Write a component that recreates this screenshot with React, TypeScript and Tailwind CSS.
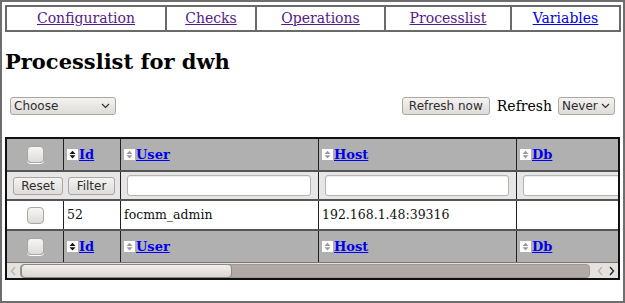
import React from "react";

const serif = { fontFamily: '"DejaVu Serif", serif' };
const sans = { fontFamily: '"DejaVu Sans", sans-serif' };

function SortIcon({ dark }: { dark?: boolean }) {
  const c = dark ? "#111" : "#9a9a9a";
  return (
    <span className="inline-block w-[11px] h-[11px] bg-white mr-[1px] align-[-1px]">
      <svg width="11" height="11" viewBox="0 0 11 11">
        <path d="M2.5 5 L5.5 1.8 L8.5 5 Z" fill={c} />
        <path d="M2.5 6.2 L5.5 9.4 L8.5 6.2 Z" fill={c} />
      </svg>
    </span>
  );
}

function Checkbox() {
  return (
    <span className="inline-block w-[17px] h-[17px] rounded-[4px] border border-[#aaa7a3] bg-gradient-to-b from-[#f7f6f5] to-[#dedbd8] shadow-[0_1px_0_#fff]" />
  );
}

function GtkButton({ children, className = "" }: { children: React.ReactNode; className?: string }) {
  return (
    <span
      className={`inline-flex items-center justify-center h-[18px] rounded-[3px] border border-[#aaa6a1] bg-gradient-to-b from-[#f4f3f2] to-[#dedbd8] text-[12px] text-[#2e2e2e] leading-none ${className}`}
      style={sans}
    >
      {children}
    </span>
  );
}

function HeadLink({ children, dark }: { children: React.ReactNode; dark?: boolean }) {
  return (
    <span className="inline-flex items-center">
      <SortIcon dark={dark} />
      <a href="#" className="text-[#0000ee] underline font-bold text-[13px]">
        {children}
      </a>
    </span>
  );
}

function TextInput({ className = "" }: { className?: string }) {
  return (
    <span className={`block h-[21px] rounded-[3px] border border-[#b6b2ae] bg-white shadow-[inset_0_1px_1px_rgba(0,0,0,0.08)] ${className}`} />
  );
}

export default function App() {
  const nav = [
    { t: "Configuration", w: "w-[160px]", v: true },
    { t: "Checks", w: "w-[90px]", v: true },
    { t: "Operations", w: "w-[129px]", v: true },
    { t: "Processlist", w: "w-[126px]", v: true },
    { t: "Variables", w: "flex-1", v: false },
  ];
  const cellV = "border-r border-[#222]";
  return (
    <div className="w-[625px] h-[303px] border-2 border-[#6e6e6e] bg-white overflow-hidden pt-[3px] pl-[3px] pr-[2px]" style={serif}>
      {/* nav */}
      <div className="flex h-[27px] border-2 border-[#6a6a6a]">
        {nav.map((n, i) => (
          <div
            key={n.t}
            className={`${n.w} shrink-0 flex items-center justify-center ${i < nav.length - 1 ? "border-r-2 border-[#6a6a6a]" : ""}`}
          >
            <a href="#" className={`text-[14px] underline ${n.v ? "text-[#551a8b]" : "text-[#0000ee]"}`}>
              {n.t}
            </a>
          </div>
        ))}
      </div>

      <h1 className="text-[21px] font-bold mt-[17px] ml-0 leading-[26px] text-black">Processlist for dwh</h1>

      {/* controls */}
      <div className="flex items-center mt-[22px] h-[18px]">
        <span
          className="ml-[5px] inline-flex items-center justify-between w-[106px] h-[18px] rounded-[3px] border border-[#aaa6a1] bg-gradient-to-b from-[#f4f3f2] to-[#dedbd8] text-[12px] text-[#2e2e2e] pl-[3px] pr-[5px]"
          style={sans}
        >
          Choose
          <svg width="9" height="6" viewBox="0 0 9 6"><path d="M1 1 L4.5 4.5 L8 1" stroke="#333" strokeWidth="1.2" fill="none" /></svg>
        </span>
        <div className="flex-1" />
        <GtkButton className="w-[88px]">Refresh now</GtkButton>
        <span className="text-[14px] ml-[7px] mr-[6px] text-black">Refresh</span>
        <span
          className="inline-flex items-center justify-between w-[57px] h-[18px] rounded-[3px] border border-[#aaa6a1] bg-gradient-to-b from-[#f4f3f2] to-[#dedbd8] text-[12px] text-[#2e2e2e] pl-[3px] pr-[4px] mr-[6px]"
          style={sans}
        >
          Never
          <svg width="9" height="6" viewBox="0 0 9 6"><path d="M1 1 L4.5 4.5 L8 1" stroke="#333" strokeWidth="1.2" fill="none" /></svg>
        </span>
      </div>

      {/* table */}
      <div className="mt-[22px] w-[615px] border-2 border-[#111] overflow-hidden">
        <div className="overflow-hidden">
          <div className="w-[800px]">
            {/* header */}
            <div className="flex h-[33px] bg-[#b0b0b0] border-b-2 border-[#555]">
              <div className={`w-[57px] flex items-center justify-center ${cellV}`}><Checkbox /></div>
              <div className={`w-[57px] flex items-center pl-[3px] ${cellV}`}><HeadLink dark>Id</HeadLink></div>
              <div className={`w-[198px] flex items-center pl-[3px] ${cellV}`}><HeadLink>User</HeadLink></div>
              <div className={`w-[198px] flex items-center pl-[3px] ${cellV}`}><HeadLink>Host</HeadLink></div>
              <div className="flex-1 flex items-center pl-[3px]"><HeadLink>Db</HeadLink></div>
            </div>
            {/* filter row */}
            <div className="flex h-[29px] bg-[#e6e6e6] border-b-2 border-[#555]">
              <div className="w-[114px] flex items-center pl-[6px] gap-[5px] border-r border-[#222]">
                <GtkButton className="w-[50px]">Reset</GtkButton>
                <GtkButton className="w-[47px]">Filter</GtkButton>
              </div>
              <div className={`w-[198px] flex items-center pl-[6px] pr-[7px] ${cellV}`}><TextInput className="w-full" /></div>
              <div className={`w-[198px] flex items-center pl-[6px] pr-[7px] ${cellV}`}><TextInput className="w-full" /></div>
              <div className="flex-1 flex items-center pl-[6px] pr-[7px]"><TextInput className="w-[184px]" /></div>
            </div>
            {/* data row */}
            <div className="flex h-[30px] bg-white border-b-2 border-[#555] text-[12.5px] text-[#111]">
              <div className={`w-[57px] flex items-center justify-center ${cellV}`}><Checkbox /></div>
              <div className={`w-[57px] flex items-center pl-[3px] ${cellV}`}>52</div>
              <div className={`w-[198px] flex items-center pl-[3px] ${cellV}`}>focmm_admin</div>
              <div className={`w-[198px] flex items-center pl-[3px] ${cellV}`}>192.168.1.48:39316</div>
              <div className="flex-1" />
            </div>
            {/* footer header */}
            <div className="flex h-[31px] bg-[#b0b0b0]">
              <div className={`w-[57px] flex items-center justify-center ${cellV}`}><Checkbox /></div>
              <div className={`w-[57px] flex items-center pl-[3px] ${cellV}`}><HeadLink dark>Id</HeadLink></div>
              <div className={`w-[198px] flex items-center pl-[3px] ${cellV}`}><HeadLink>User</HeadLink></div>
              <div className={`w-[198px] flex items-center pl-[3px] ${cellV}`}><HeadLink>Host</HeadLink></div>
              <div className="flex-1 flex items-center pl-[3px]"><HeadLink>Db</HeadLink></div>
            </div>
          </div>
        </div>
        {/* scrollbar */}
        <div className="flex items-center h-[16px] bg-[#e4e1de] border-t border-[#7a7572]">
          <svg width="13" height="16" viewBox="0 0 13 16" className="shrink-0">
            <path d="M8 4 L4.5 8 L8 12" stroke="#b9b5b1" strokeWidth="1.4" fill="none" />
          </svg>
          <div className="flex-1 h-[14px] rounded-[4px] bg-[#b1a9a5] border border-[#9d9692] relative">
            <div className="absolute left-0 top-[-1px] h-[14px] w-[211px] rounded-[4px] border border-[#8d8883] bg-gradient-to-b from-[#f1f0ee] to-[#d9d5d2]" />
          </div>
          <svg width="28" height="16" viewBox="0 0 28 16" className="shrink-0">
            <path d="M12 4 L8.5 8 L12 12" stroke="#b9b5b1" strokeWidth="1.4" fill="none" />
            <path d="M20 4 L23.5 8 L20 12" stroke="#2a2a2a" strokeWidth="1.4" fill="none" />
          </svg>
        </div>
      </div>
    </div>
  );
}
